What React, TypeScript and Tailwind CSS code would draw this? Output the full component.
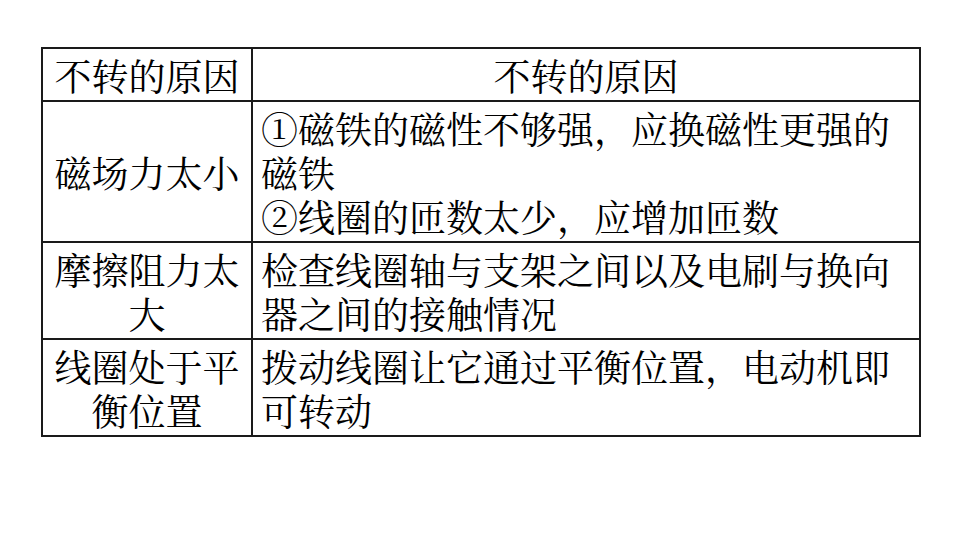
const rows = [
  {
    cause: '磁场力太小',
    fix: ['①磁铁的磁性不够强，应换磁性更强的磁铁', '②线圈的匝数太少，应增加匝数'],
    h: 'h-[141px]',
  },
  {
    cause: '摩擦阻力太大',
    fix: ['检查线圈轴与支架之间以及电刷与换向器之间的接触情况'],
    h: 'h-[97px]',
  },
  {
    cause: '线圈处于平衡位置',
    fix: ['拨动线圈让它通过平衡位置，电动机即可转动'],
    h: 'h-[97px]',
  },
];

const App = () => {
  return (
    <div
      className="w-[960px] h-[540px] bg-white text-black pt-[47px] pl-[41px]"
      style={{ fontFamily: '"Noto Serif CJK SC", "Noto Sans CJK SC", serif' }}
    >
      <table className="border-collapse table-fixed w-[878px] text-[37px] leading-[44px]">
        <colgroup>
          <col className="w-[210px]" />
          <col className="w-[668px]" />
        </colgroup>
        <thead>
          <tr className="h-[53px]">
            <th className="border-2 border-[#1a1a1a] font-normal text-center align-middle px-1">
              不转的原因
            </th>
            <th className="border-2 border-[#1a1a1a] font-normal text-center align-middle px-1">
              不转的原因
            </th>
          </tr>
        </thead>
        <tbody>
          {rows.map((r) => (
            <tr key={r.cause} className={r.h}>
              <td className="border-2 border-[#1a1a1a] text-center align-middle px-1">
                {r.cause}
              </td>
              <td className="border-2 border-[#1a1a1a] text-left align-middle pl-[8px] pr-1">
                {r.fix.map((line) => (
                  <div key={line}>{line}</div>
                ))}
              </td>
            </tr>
          ))}
        </tbody>
      </table>
    </div>
  );
};

export default App;
